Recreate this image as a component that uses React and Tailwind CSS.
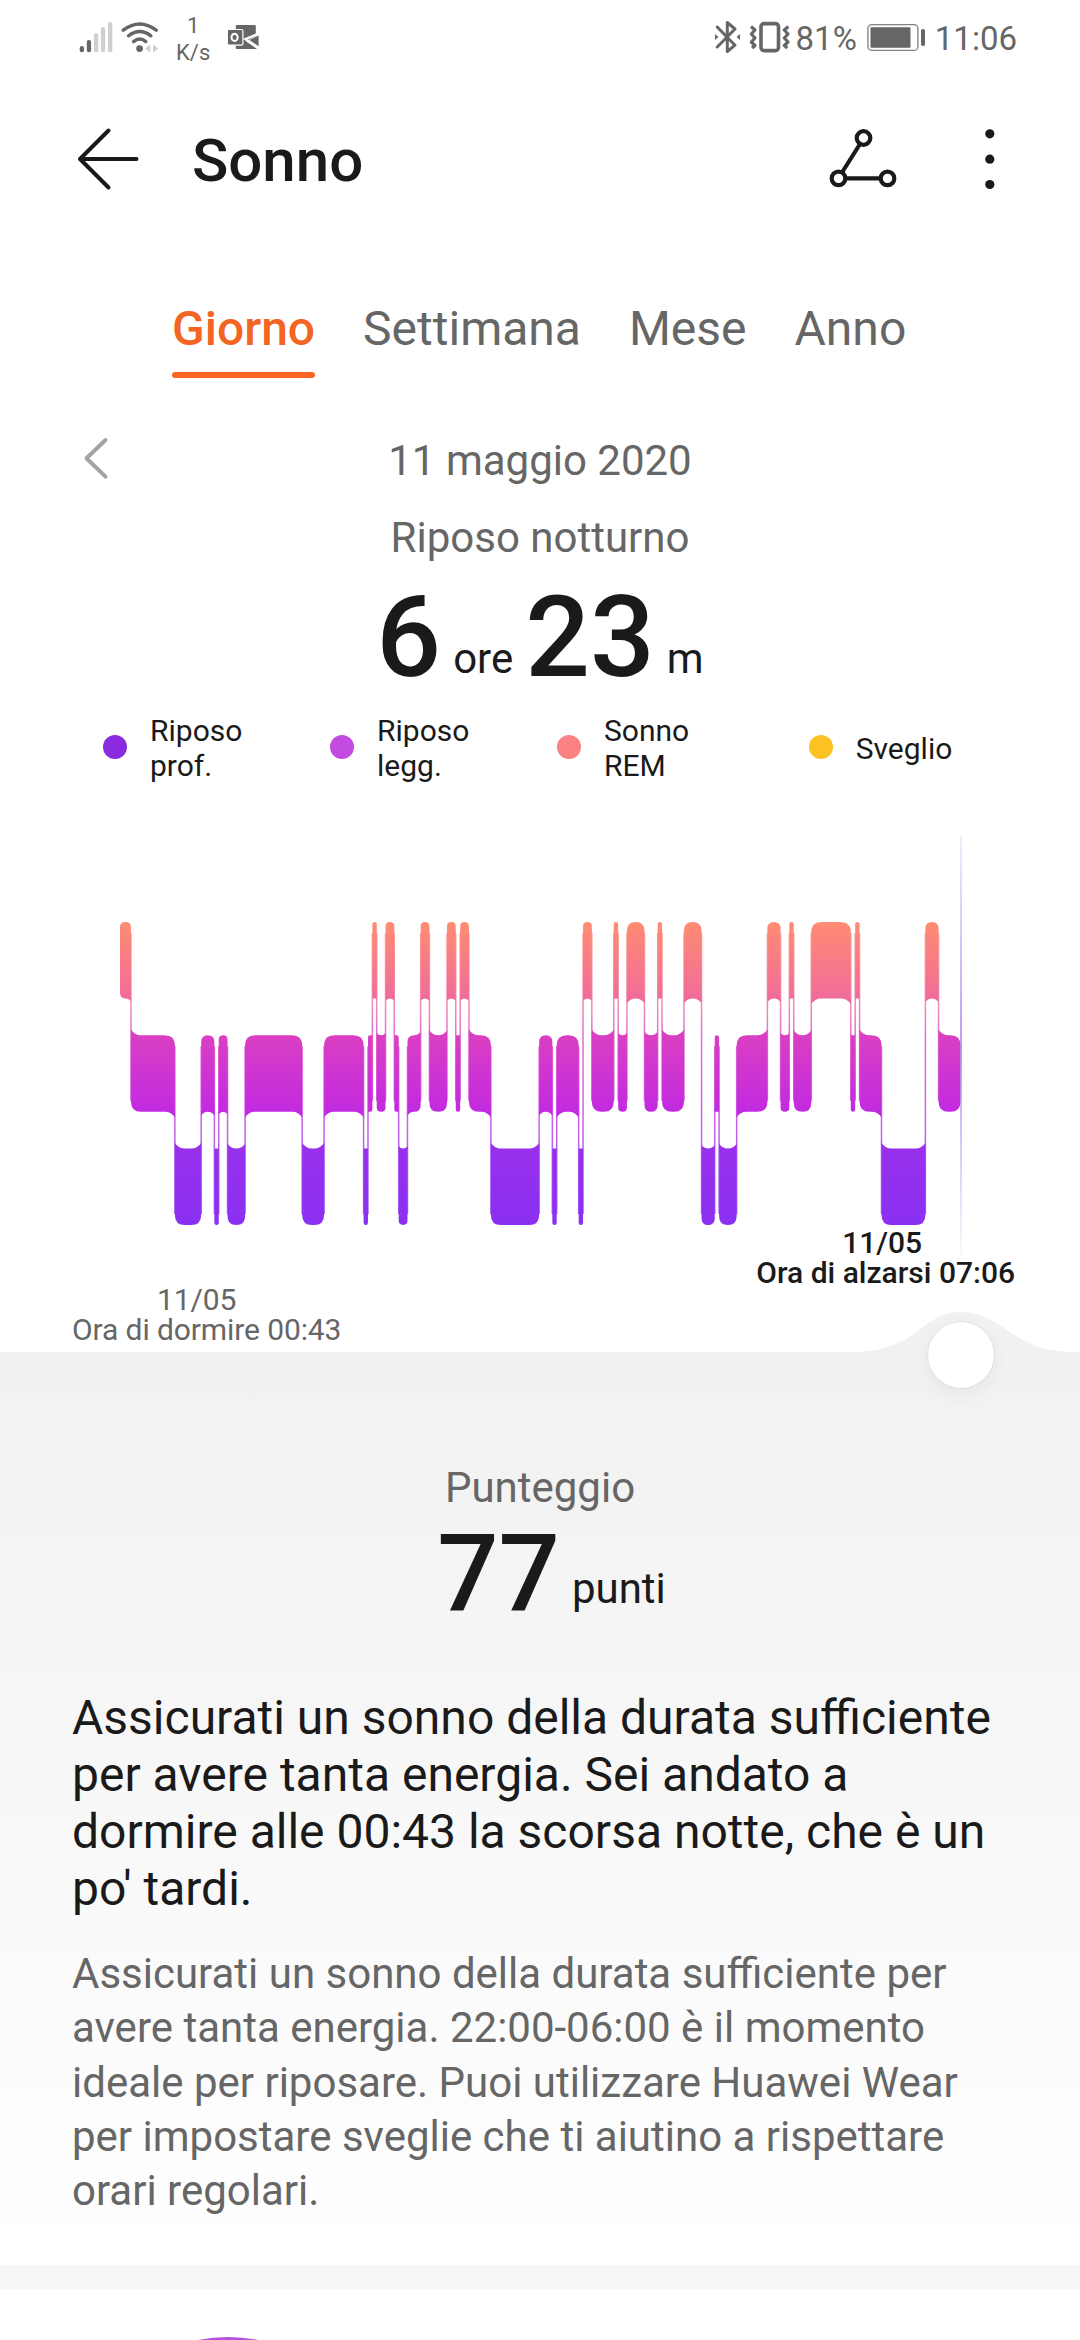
const REM = 0;
const LIGHT = 1;
const DEEP = 2;

// [stage, minutes] from 00:43 to 07:06
const STAGES = [
  [REM, 5], [LIGHT, 20], [DEEP, 12], [LIGHT, 6], [DEEP, 2], [LIGHT, 4], [DEEP, 8],
  [LIGHT, 26], [DEEP, 10], [LIGHT, 18], [DEEP, 2], [LIGHT, 2], [REM, 2], [LIGHT, 4],
  [REM, 4], [LIGHT, 2], [DEEP, 4], [LIGHT, 6], [REM, 4], [LIGHT, 8], [REM, 4],
  [LIGHT, 2], [REM, 4], [LIGHT, 10], [DEEP, 22], [LIGHT, 6], [DEEP, 2], [LIGHT, 10],
  [DEEP, 2], [REM, 4], [LIGHT, 10], [REM, 2], [LIGHT, 4], [REM, 8], [LIGHT, 6],
  [REM, 2], [LIGHT, 10], [REM, 8], [DEEP, 6], [LIGHT, 2], [DEEP, 8], [LIGHT, 14],
  [REM, 6], [LIGHT, 4], [REM, 2], [LIGHT, 8], [REM, 18], [LIGHT, 2], [REM, 2],
  [LIGHT, 10], [DEEP, 20], [REM, 6], [LIGHT, 10],
];

const CHART_X = 120;
const CHART_W = 840.5;
const TOTAL = STAGES.reduce((sum, [, min]) => sum + min, 0);
const TOPS = [139, 252.3, 365.5];
const BAR_H = 76.5;

const LEGEND = [
  { label: ["Riposo", "prof."], color: "bg-[#8a2be0]" },
  { label: ["Riposo", "legg."], color: "bg-[#c44be2]" },
  { label: ["Sonno", "REM"], color: "bg-[#fc8182]" },
  { label: ["Sveglio"], color: "bg-[#fcc224]" },
];

const TABS = ["Giorno", "Settimana", "Mese", "Anno"];

// Corners facing another stage flare towards it, the others are rounded
function barPath(x, w, stage, prev, next) {
  const top = TOPS[stage];
  const bottom = top + BAR_H;
  const right = x + w;
  const r = Math.min(10, w / 2);
  const f = w < 5 ? 0 : r * 0.58;
  const up = (s) => s !== null && s < stage;
  const down = (s) => s !== null && s > stage;
  const tl = up(prev) ? -f : r;
  const tr = up(next) ? -f : r;
  const br = down(next) ? -f : r;
  const bl = down(prev) ? -f : r;
  return [
    `M${x} ${top + tl}`,
    `Q${x + (tl < 0 ? r * 0.35 : 0)} ${top} ${x + r} ${top}`,
    `H${right - r}`,
    `Q${right - (tr < 0 ? r * 0.35 : 0)} ${top} ${right} ${top + tr}`,
    `V${bottom - br}`,
    `Q${right - (br < 0 ? r * 0.35 : 0)} ${bottom} ${right - r} ${bottom}`,
    `H${x + r}`,
    `Q${x + (bl < 0 ? r * 0.35 : 0)} ${bottom} ${x} ${bottom - bl}`,
    "Z",
  ].join(" ");
}

function SleepChart() {
  let minutes = 0;
  const bars = STAGES.map(([stage, min], i) => {
    const x = CHART_X + (minutes / TOTAL) * CHART_W;
    minutes += min;
    return {
      x,
      w: (min / TOTAL) * CHART_W,
      stage,
      prev: i > 0 ? STAGES[i - 1][0] : null,
      next: i < STAGES.length - 1 ? STAGES[i + 1][0] : null,
    };
  });

  return (
    <svg className="block h-[444px] w-[1080px]" viewBox="0 0 1080 444">
      <defs>
        <linearGradient id="sleep" gradientUnits="userSpaceOnUse" x1="0" y1="139" x2="0" y2="442">
          <stop offset="0" stopColor="#ff8c72" />
          <stop offset="0.25" stopColor="#f06c98" />
          <stop offset="0.375" stopColor="#da3fc2" />
          <stop offset="0.625" stopColor="#c22ae0" />
          <stop offset="0.75" stopColor="#9830ec" />
          <stop offset="1" stopColor="#8a30f2" />
        </linearGradient>
      </defs>
      {bars.slice(1).map((b) => {
        const y1 = TOPS[Math.min(b.stage, b.prev)] + 11;
        const y2 = TOPS[Math.max(b.stage, b.prev)] + BAR_H - 11;
        return (
          <rect key={b.x} x={b.x - 0.75} y={y1} width="1.5" height={y2 - y1} fill="url(#sleep)" opacity="0.75" />
        );
      })}
      <g fill="url(#sleep)">
        {bars.map((b) => (
          <path key={b.x} d={barPath(b.x, b.w, b.stage, b.prev, b.next)} />
        ))}
      </g>
    </svg>
  );
}

function StatusBar() {
  return (
    <div className="flex h-[77px] items-center justify-between pl-[79px] pr-[63px] text-[#666]">
      <div className="flex items-center">
        <svg className="h-[77px] w-[34px]" viewBox="79 0 34 77" fill="currentColor">
          <rect x="79.7" y="46" width="4.3" height="6.3" rx="2" />
          <rect x="86.8" y="40" width="4.3" height="12.3" rx="2" />
          <g fill="#d0d0d0">
            <rect x="94" y="33.3" width="4.3" height="19" rx="2" />
            <rect x="100.9" y="27" width="4.3" height="25.3" rx="2" />
            <rect x="108" y="22" width="4.3" height="30.3" rx="2" />
          </g>
        </svg>
        <svg className="ml-2 h-[77px] w-[38px]" viewBox="121 0 38 77" fill="none" stroke="currentColor" strokeWidth="3.4" strokeLinecap="round">
          <path d="M123.2 30.2Q139.7 17.8 156.2 30.2" />
          <path d="M128.5 35.8Q139.7 27.4 150.9 35.8" />
          <path d="M133.6 41.6Q139.7 36.6 145.8 41.6" />
          <circle cx="139.6" cy="48.6" r="3.4" fill="currentColor" stroke="none" />
          <path d="M145 48.5L150.3 44.5V52.5Z M158.5 48.5L153 44.5V52.5Z" fill="#d0d0d0" stroke="none" />
        </svg>
        <p className="ml-[17px] text-center text-[22px] leading-[27px]">
          1<br />K/s
        </p>
        <svg className="ml-[17px] h-[77px] w-8" viewBox="227 0 32 77" fill="currentColor">
          <path d="M236.5 25H254.5Q255.8 25 255.8 26.3V36L246 41.5L258.5 49H236.5Q235.8 49 235.8 48V26Q235.8 25 236.5 25Z" />
          <path d="M243 38.8L258.4 50V47.2L247.5 39.8L258.4 35V32.6Z" fill="#fff" />
          <path d="M249.5 40L258.6 35.6V46.2Z" />
          <rect x="227.3" y="29.5" width="15.6" height="15.6" rx="1.5" stroke="#fff" strokeWidth="1.2" />
          <ellipse cx="234.6" cy="37.4" rx="3.1" ry="3.6" fill="none" stroke="#fff" strokeWidth="2" />
        </svg>
      </div>
      <div className="flex items-center text-[33px] leading-[39px]">
        <svg className="h-[77px] w-[27px]" viewBox="714 0 27 77" fill="none" stroke="currentColor" strokeWidth="3">
          <path d="M717.2 27L735 45.2L727.3 51.5V22.5L735 29L717.2 47" strokeLinejoin="round" strokeLinecap="round" />
          <path d="M715 34V40L718.3 37Z M740 34V40L736.7 37Z" fill="currentColor" stroke="none" />
        </svg>
        <svg className="ml-[7px] h-[77px] w-[42px]" viewBox="748 0 42 77" fill="none" stroke="currentColor">
          <rect x="761" y="23.6" width="17.5" height="27" rx="3" strokeWidth="3.6" />
          <path d="M751 26.5L755 30L751.3 34L755 38L751.3 42L755 45.5L752 48" strokeWidth="3.2" strokeLinejoin="round" />
          <path d="M788.3 26.5L784.3 30L788 34L784.3 38L788 42L784.3 45.5L787.3 48" strokeWidth="3.2" strokeLinejoin="round" />
        </svg>
        <span className="ml-[6px]">81%</span>
        <svg className="ml-[9px] h-[77px] w-[60px]" viewBox="866 0 60 77" fill="currentColor">
          <rect x="867.9" y="24.6" width="50" height="25.8" rx="4" fill="none" stroke="#808080" strokeWidth="1.3" />
          <rect x="870.5" y="27.3" width="40" height="20.5" rx="1" />
          <rect x="921" y="29" width="4" height="17" rx="1.8" />
        </svg>
        <span className="ml-[9px]">11:06</span>
      </div>
    </div>
  );
}

function Header() {
  return (
    <header className="flex h-[167px] items-center pl-[76px] pr-[84px] text-[#1a1a1a]">
      <svg className="mb-[3px] h-16 w-16" viewBox="76 127 64 64" fill="none" stroke="currentColor" strokeWidth="4" strokeLinecap="round" strokeLinejoin="round">
        <path d="M108.5 130.5L80 159L108.5 187.5M80 159H136.5" />
      </svg>
      <h1 className="ml-[52px] text-[60px] font-medium leading-[71px]">Sonno</h1>
      <svg className="mb-[3px] ml-auto h-16 w-[68px]" viewBox="829 127 68 64" fill="none" stroke="currentColor" strokeWidth="4.2">
        <circle cx="863.5" cy="138" r="6.8" />
        <circle cx="838.5" cy="178.4" r="6.8" />
        <circle cx="887.5" cy="178.4" r="6.8" />
        <path d="M860 144L842 172.5M845.3 178.4H880.7" />
      </svg>
      <svg className="mb-[3px] ml-[87px] h-16 w-3" viewBox="984 127 12 64" fill="currentColor">
        <circle cx="989.8" cy="133.8" r="4.6" />
        <circle cx="989.8" cy="159.2" r="4.6" />
        <circle cx="989.8" cy="184.5" r="4.6" />
      </svg>
    </header>
  );
}

export default function App() {
  return (
    <div className="h-[2340px] w-[1080px] overflow-hidden bg-white font-[Roboto,sans-serif] text-[#666]">
      <StatusBar />
      <Header />

      <nav className="mt-14 flex gap-12 pl-[172px] text-[48px] leading-[57px]">
        {TABS.map((tab, i) => (
          <div key={tab} className={i === 0 ? "font-medium text-[#f26522]" : ""}>
            {tab}
            <div className={i === 0 ? "mt-[15px] h-[6px] rounded-full bg-[#fb6522]" : "mt-[15px] h-[6px]"} />
          </div>
        ))}
      </nav>

      <div className="mt-[58px] grid h-[49px] grid-cols-[1fr_auto_1fr] items-center px-[82px] text-[42px] leading-[49px]">
        <svg className="h-[49px] w-7" viewBox="82 436 28 49" fill="none" stroke="#a3a3a3" strokeWidth="4" strokeLinecap="round" strokeLinejoin="round">
          <path d="M105.5 440L86.5 458.3L105.5 476.6" />
        </svg>
        <span>11 maggio 2020</span>
      </div>

      <p className="mt-7 text-center text-[42px] leading-[49px]">Riposo notturno</p>
      <div className="mt-2 flex items-end justify-center gap-3 text-[#1a1a1a]">
        <span className="text-[114px] font-medium leading-[134px]">6</span>
        <span className="pb-[21px] text-[42px] leading-[49px]">ore</span>
        <span className="text-[114px] font-medium leading-[134px]">23</span>
        <span className="pb-[21px] text-[42px] leading-[49px]">m</span>
      </div>

      <ul className="mt-[9px] grid h-[70px] grid-cols-[repeat(4,227px)] justify-center text-[30px] leading-[35px] text-[#1a1a1a]">
        {LEGEND.map(({ label, color }) => (
          <li key={label.join()} className="flex items-center justify-center gap-[23px]">
            <span className={`mb-[2px] size-6 rounded-full ${color}`} />
            <span className={label.length > 1 ? "w-[146px]" : ""}>
              {label[0]}
              {label[1] && <br />}
              {label[1]}
            </span>
          </li>
        ))}
      </ul>

      <section className="relative h-[569px]">
        <SleepChart />
        <div className="flex items-start justify-between pl-[72px] pr-[65px] text-center text-[30px] leading-[30px]">
          <p className="mt-[58px] tracking-[-0.1px]">
            <span className="block pr-5">11/05</span>
            <span className="block">Ora di dormire 00:43</span>
          </p>
          <p className="mt-px font-medium text-[#1a1a1a]">
            <span className="block pr-[7px]">11/05</span>
            <span className="block">Ora di alzarsi 07:06</span>
          </p>
        </div>

        <div className="absolute left-[960px] top-[53px] h-[422px] w-[2px] bg-linear-to-b from-[#a77be8]/15 via-[#a77be8]/75 to-[#a77be8]/5" />
        <svg className="absolute -bottom-px left-[850px] h-[42px] w-[230px]" viewBox="850 1311 230 42">
          <path
            d="M850 1353V1352C880 1352 895 1345 907 1338.5C925 1328 935 1312 961 1312C988 1312 1000 1328 1025 1341C1040 1348 1050 1352 1075 1352H1080V1353Z"
            fill="#f1f1f1"
          />
        </svg>
        <button className="absolute left-[928px] top-[539px] size-[66px] rounded-full bg-white shadow-[0_0_2px_rgba(0,0,0,0.12),0_6px_18px_rgba(0,0,0,0.05)]" />
      </section>

      <section className="h-[913px] bg-linear-to-b from-[#f1f1f1] to-white pl-[72px] pt-[111px]">
        <div className="pr-[72px]">
          <p className="text-center text-[42px] leading-[49px]">Punteggio</p>
          <div className="flex items-end justify-center gap-3 pl-[23px] text-[#1a1a1a]">
            <span className="text-[108px] font-medium leading-[124px]">77</span>
            <span className="pb-[23px] text-[42px] leading-[49px]">punti</span>
          </div>
        </div>
        <p className="mt-[53px] whitespace-nowrap text-[48px] leading-[57px] text-[#1a1a1a]">
          Assicurati un sonno della durata sufficiente
          <br />
          per avere tanta energia. Sei andato a
          <br />
          dormire alle 00:43 la scorsa notte, che è un
          <br />
          po' tardi.
        </p>
        <p className="mt-[30px] whitespace-nowrap text-[42px] leading-[54.25px]">
          Assicurati un sonno della durata sufficiente per
          <br />
          avere tanta energia. 22:00-06:00 è il momento
          <br />
          ideale per riposare. Puoi utilizzare Huawei Wear
          <br />
          per impostare sveglie che ti aiutino a rispettare
          <br />
          orari regolari.
        </p>
      </section>

      <div className="h-6 bg-[#f6f6f6]" />
      <section className="h-[51px] overflow-hidden pl-[78px] pt-12">
        <div className="size-[300px] rounded-full border-[30px] border-[#b94fdd]" />
      </section>
    </div>
  );
}
